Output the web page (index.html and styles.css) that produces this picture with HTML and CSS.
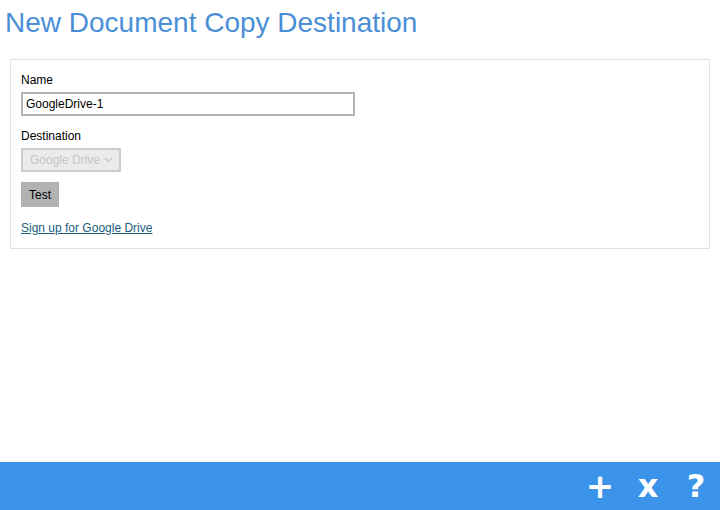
FILE: index.html
```html
<!DOCTYPE html>
<html>
<head>
<meta charset="utf-8">
<link rel="stylesheet" href="styles.css">
</head>
<body>
<div class="page">
  <main class="main">
    <h1 class="title">New Document Copy Destination</h1>
    <section class="panel">
      <div class="field">
        <label class="label">Name</label>
        <input class="input" type="text" value="GoogleDrive-1">
      </div>
      <div class="field">
        <label class="label">Destination</label>
        <div class="select">Google Drive <span class="chev"><svg width="9" height="6" viewBox="0 0 9 6"><path d="M1 1l3.5 3.5L8 1" fill="none" stroke="#c8c8c8" stroke-width="1.5"/></svg></span></div>
      </div>
      <button class="btn">Test</button>
      <a class="link" href="#">Sign up for Google Drive</a>
    </section>
  </main>
  <footer class="bar">
    <span class="icon plus">+</span>
    <span class="icon">x</span>
    <span class="icon">?</span>
  </footer>
</div>
</body>
</html>
```
FILE: styles.css
```css
html, body { margin: 0; padding: 0; }
body { font-family: "Liberation Sans", Arial, sans-serif; background: #fff; }
.page { display: flex; flex-direction: column; height: 510px; width: 720px; }
.main { flex: 1; padding: 0 10px; }
.title {
  margin: 6px 0 0 -5px;
  font-size: 28px;
  font-weight: normal;
  color: #4a8fd6;
  line-height: 34px;
  height: 53px;
}
.panel {
  border: 1px solid #e3e3e3;
  padding: 13px 10px 13px;
  display: flex;
  flex-direction: column;
  align-items: flex-start;
}
.field { display: flex; flex-direction: column; align-items: flex-start; margin-bottom: 13px; }
.label { font-size: 12px; color: #000; line-height: 14px; margin-bottom: 5px; }
.input {
  box-sizing: border-box;
  width: 334px; height: 24px;
  border: 2px solid #b4b4b4;
  padding: 0 3px;
  font-family: "Liberation Sans", Arial, sans-serif;
  font-size: 12px;
  color: #000;
  outline: none;
  margin: 0;
}
.select {
  box-sizing: border-box;
  width: 100px; height: 24px;
  border: 2px solid #cdcdcd;
  background: #ebebeb;
  color: #c6c6c6;
  font-size: 12px;
  line-height: 20px;
  padding-left: 7px;
  display: flex; align-items: center; gap: 4px;
}
.chev { display: inline-flex; }
.btn {
  margin: -3px 0 0;
  width: 38px; height: 25px;
  border: none;
  background: #b2b2b2;
  font-family: "Liberation Sans", Arial, sans-serif;
  font-size: 12px;
  color: #000;
  padding: 0;
}
.link {
  margin-top: 14px;
  font-size: 12px;
  color: #1b5d80;
  text-decoration: underline;
}
.bar {
  height: 48px;
  background: #3b94e9;
  display: flex;
  justify-content: flex-end;
  align-items: center;
}
.icon {
  color: #fff;
  font-family: "DejaVu Sans", sans-serif;
  font-weight: bold;
  font-size: 32px;
  line-height: 1;
  width: 48px;
  text-align: center;
}
.plus { font-size: 34px; }
```
